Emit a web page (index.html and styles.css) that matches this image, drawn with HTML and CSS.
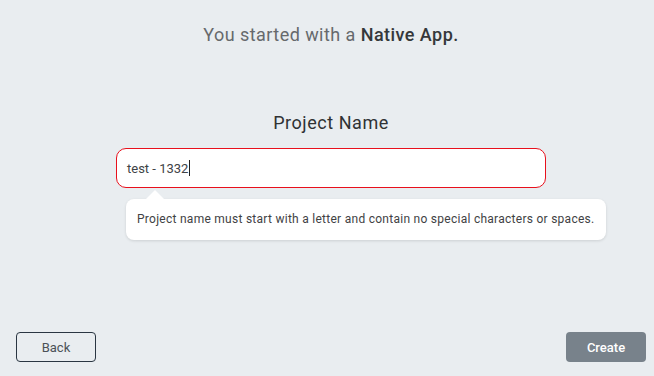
FILE: index.html
```html
<!DOCTYPE html>
<html lang="en">

<head>
  <meta charset="UTF-8" />
  <meta name="viewport" content="width=device-width, initial-scale=1.0" />
  <title>Project Name</title>
  <link rel="stylesheet" href="styles.css">
</head>

<body>
  <div class="page">

    <div class="intro">You started with a <strong>Native App.</strong></div>

    <div class="form">
      <div class="form-title">Project Name</div>
      <div class="field">
        <div class="name-input">test - 1332<span class="caret"></span></div>
        <div class="hint">Project name must start with a letter and contain no special characters or spaces.</div>
      </div>
    </div>

    <div class="actions">
      <button class="btn btn-back">Back</button>
      <button class="btn btn-create">Create</button>
    </div>

  </div>
</body>

</html>
```

FILE: styles.css
```css
body {
  font-family: Roboto, 'Noto Sans', sans-serif;
  background-color: #e9edf0;
  margin: 0;
}

.page {
  height: 376px;
  display: flex;
  flex-direction: column;
  box-sizing: border-box;
  padding: 24px 8px 14px 16px;
}

.intro {
  text-align: center;
  font-size: 18px;
  color: #66696c;
  letter-spacing: 0.45px;
}

.intro strong {
  font-weight: 500;
  color: #35383a;
}

.form {
  margin-top: 67px;
  display: flex;
  flex-direction: column;
  align-items: center;
  flex: 1;
}

.form-title {
  font-size: 18px;
  color: #2f3234;
  letter-spacing: 0.55px;
}

.field {
  position: relative;
  width: 430px;
  margin-top: 15px;
}

.name-input {
  box-sizing: border-box;
  height: 40px;
  background-color: #fff;
  border: 1px solid #e8101c;
  border-radius: 10px;
  padding: 0 10px;
  display: flex;
  align-items: center;
  font-size: 13px;
  color: #404346;
  letter-spacing: 0;
}

.caret {
  display: inline-block;
  width: 1px;
  height: 16px;
  background-color: #222;
  margin-left: 1px;
}

.hint {
  position: absolute;
  left: 10px;
  top: 51px;
  white-space: nowrap;
  background-color: #fff;
  border-radius: 8px;
  padding: 13px 11px 14px;
  font-size: 12px;
  letter-spacing: 0.27px;
  color: #3f4244;
  box-shadow: 0 1px 3px rgba(0, 0, 0, 0.12);
}

.hint::before {
  content: '';
  position: absolute;
  left: 19px;
  top: -9px;
  border-left: 10px solid transparent;
  border-right: 10px solid transparent;
  border-bottom: 10px solid #fff;
}

.actions {
  display: flex;
  justify-content: space-between;
}

.btn {
  font-family: Roboto, 'Noto Sans', sans-serif;
  width: 80px;
  height: 30px;
  border-radius: 4px;
  font-size: 13px;
  cursor: pointer;
}

.btn-back {
  background: transparent;
  border: 1px solid #2a3642;
  color: #4b5157;
}

.btn-create {
  background-color: #78828b;
  border: none;
  color: #fff;
  font-weight: 500;
}
```
